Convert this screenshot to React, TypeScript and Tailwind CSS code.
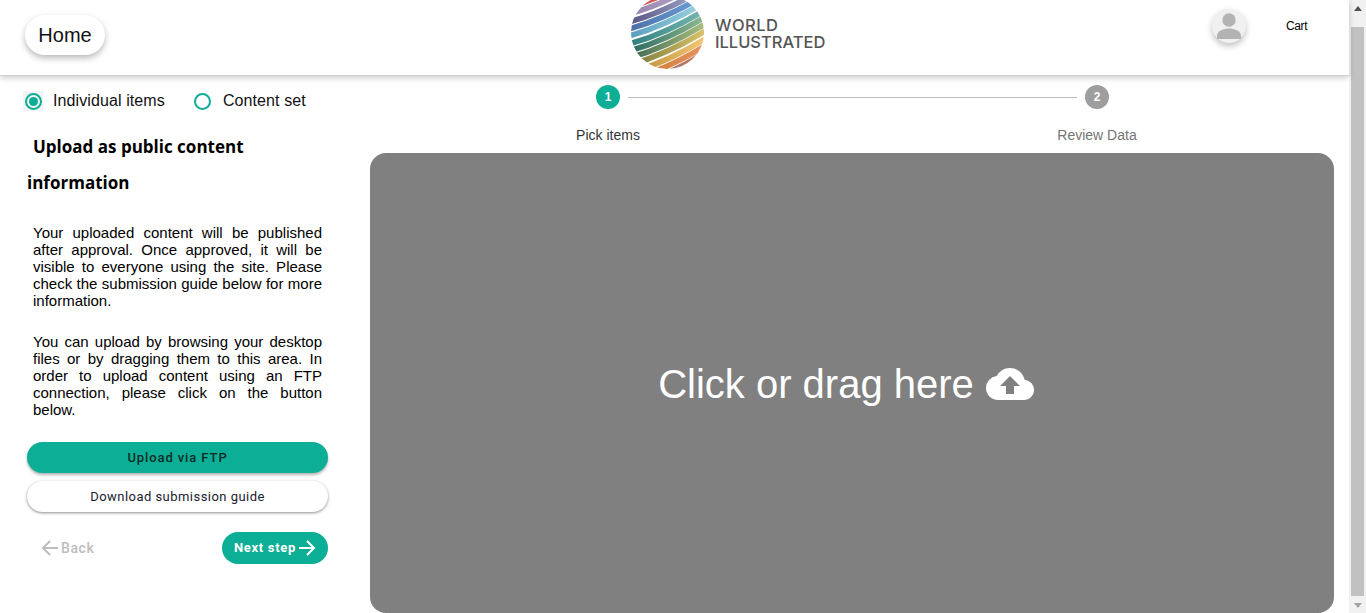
import { MdCloudUpload } from "react-icons/md";

const stripes = [
    { y: 8, from: "#c84a4a", to: "#e8756b" },
    { y: 15, from: "#9a86b0", to: "#b7a7c9" },
    { y: 23, from: "#5a5585", to: "#a8b0d0" },
    { y: 30, from: "#4e6fa8", to: "#6aa4d8" },
    { y: 37, from: "#5a9fc0", to: "#9fd4e0" },
    { y: 45, from: "#2f7f80", to: "#79b8b0" },
    { y: 52, from: "#2c6a60", to: "#8fb98f" },
    { y: 59, from: "#3f6a50", to: "#a9bd7e" },
    { y: 66, from: "#77783a", to: "#d9c26a" },
    { y: 74, from: "#b98a2c", to: "#f4c777" },
    { y: 81, from: "#c77a2c", to: "#e89060" },
    { y: 88, from: "#7a8aa0", to: "#c87050" },
];

const Globe = () => (
    <svg width="74" height="70" viewBox="631 0 74 70" className="block blur-[0.5px]">
        <defs>
            <clipPath id="globe-clip">
                <circle cx="667.5" cy="32.5" r="36.5" />
            </clipPath>
            {stripes.map((stripe) => (
                <linearGradient
                    key={stripe.y}
                    id={`band-${stripe.y}`}
                    gradientUnits="userSpaceOnUse"
                    x1="631"
                    y1="0"
                    x2="704"
                    y2="0"
                >
                    <stop offset="0" stopColor={stripe.from} />
                    <stop offset="1" stopColor={stripe.to} />
                </linearGradient>
            ))}
        </defs>
        <g clipPath="url(#globe-clip)">
            {stripes.map((stripe) => (
                <path
                    key={stripe.y}
                    d={`M625 ${stripe.y}Q665 ${stripe.y - 10} 710 ${stripe.y - 38}`}
                    fill="none"
                    stroke={`url(#band-${stripe.y})`}
                    strokeWidth="5.6"
                />
            ))}
        </g>
    </svg>
);

const PersonIcon = () => (
    <svg width="34" height="34" viewBox="0 0 34 34" className="block">
        <circle cx="17" cy="11" r="6.7" fill="#b3b3b3" />
        <path
            d="M5 30v-3.5C5 22 12 19.5 17 19.5S29 22 29 26.5V30Z"
            fill="#b3b3b3"
        />
    </svg>
);

const Radio = ({ label, checked }: { label: string; checked?: boolean }) => (
    <div className="flex items-center">
        <span
            className={`flex h-5 w-5 items-center justify-center ${checked ? "bg-[#f3f3f3]" : ""}`}
        >
            <span className="flex h-[17px] w-[17px] items-center justify-center rounded-full border-2 border-[#0cae95]">
                {checked && <span className="h-[9px] w-[9px] rounded-full bg-[#0cae95]" />}
            </span>
        </span>
        <span className="ml-[10px] text-base text-[#111] font-['Liberation_Sans',sans-serif] tracking-[0.1px]">
            {label}
        </span>
    </div>
);

const Sidebar = () => (
    <aside className="w-[370px] shrink-0">
        <div className="mt-[13px] ml-[23px] flex gap-[28px]">
            <Radio label="Individual items" checked />
            <Radio label="Content set" />
        </div>
        <h2 className="mt-[16px] ml-[27px] w-[300px] text-[17px] leading-9 font-bold text-black indent-[6px] font-['Open_Sans',sans-serif]">
            Upload as public content information
        </h2>
        <div className="mt-[23px] ml-[33px] w-[289px] text-justify text-[15px] leading-[17px] text-black font-['Liberation_Sans',sans-serif]">
            <p>
                Your uploaded content will be published after approval. Once approved, it will be
                visible to everyone using the site. Please check the submission guide below for more
                information.
            </p>
            <p className="mt-[24px]">
                You can upload by browsing your desktop files or by dragging them to this area. In
                order to upload content using an FTP connection, please click on the button below.
            </p>
        </div>
        <div className="mt-[24px] ml-[27px] flex w-[301px] flex-col gap-2 font-['Roboto',sans-serif]">
            <button className="h-[31px] rounded-full bg-[#0cae95] text-[13px] font-medium tracking-[0.9px] text-[#0d2b26] shadow-[0_2px_3px_rgba(0,0,0,0.3)]">
                Upload via FTP
            </button>
            <button className="h-[31px] rounded-full bg-white text-[13px] tracking-[0.46px] text-[#1a1a2e] shadow-[0_1px_3px_rgba(0,0,0,0.45)]">
                Download submission guide
            </button>
            <div className="mt-3 flex items-center justify-between">
                <button className="ml-[14px] flex items-center gap-[3px] pb-[1px] text-sm font-medium tracking-[0.6px] text-[#bdbdbd]">
                    <svg width="17" height="16" viewBox="0 0 17 16" fill="none" stroke="currentColor" strokeWidth="2">
                        <path d="M17 8H2M9 1 2 8l7 7" />
                    </svg>
                    Back
                </button>
                <button className="flex h-8 w-[106px] items-center justify-center gap-[3px] rounded-full bg-[#0cae95] pb-[1px] text-[13px] font-bold tracking-[0.7px] text-white">
                    Next step
                    <svg width="17" height="16" viewBox="0 0 17 16" fill="none" stroke="currentColor" strokeWidth="2">
                        <path d="M0 8h15M8 1l7 7-7 7" />
                    </svg>
                </button>
            </div>
        </div>
    </aside>
);

const Stepper = () => (
    <div className="font-['Liberation_Sans',sans-serif]">
        <div className="mt-[9px] ml-[226px] flex w-[513px] items-center">
            <span className="flex h-6 w-6 items-center justify-center rounded-full bg-[#0cae95] text-xs font-bold text-white">
                1
            </span>
            <span className="mx-2 h-px flex-1 bg-[#bdbdbd]" />
            <span className="flex h-6 w-6 items-center justify-center rounded-full bg-[#9e9e9e] text-xs font-bold text-white">
                2
            </span>
        </div>
        <div className="mt-[18px] ml-[190px] flex w-[585px] justify-between text-center text-sm leading-4">
            <span className="w-24 text-[#333]">Pick items</span>
            <span className="w-24 text-[#757575]">Review Data</span>
        </div>
    </div>
);

const App = () => {
    return (
        <div className="flex h-[613px] overflow-hidden bg-white">
            <div className="flex w-[1349px] flex-col">
                <header className="relative z-10 flex h-[76px] shrink-0 border-b border-[#d0d0d0] bg-white shadow-[0_2px_6px_rgba(0,0,0,0.2)]">
                    <div className="w-[631px] shrink-0 pt-[15px] pl-[25px]">
                        <button className="h-10 w-20 rounded-full bg-white text-xl text-[#111] shadow-[0_3px_6px_rgba(0,0,0,0.28)] font-['Liberation_Sans',sans-serif]">
                            Home
                        </button>
                    </div>
                    <Globe />
                    <div className="mt-[17px] ml-[10px] w-[497px] shrink-0 text-[16.5px] leading-[17px] font-medium text-[#555] font-['Inter',sans-serif]">
                        <div className="tracking-[0.5px]">WORLD</div>
                        <div>ILLUSTRATED</div>
                    </div>
                    <div className="absolute top-[9px] left-[1212px] h-[34px] w-[34px] rounded-full bg-[#f0f0f0] shadow-[0_3px_6px_rgba(0,0,0,0.25)]">
                        <PersonIcon />
                    </div>
                    <span className="absolute top-[18px] left-[1286px] text-xs tracking-[-0.4px] text-black font-['Liberation_Sans',sans-serif]">
                        Cart
                    </span>
                </header>
                <div className="flex min-h-0 flex-1">
                    <Sidebar />
                    <main className="flex w-[964px] shrink-0 flex-col">
                        <Stepper />
                        <div className="mt-[10px] flex flex-1 items-center justify-center gap-3 rounded-2xl bg-[#808080] pt-[2px] pr-[12px] text-white font-['Liberation_Sans',sans-serif]">
                            <span className="text-[40px] leading-none">Click or drag here</span>
                            <MdCloudUpload size={48} />
                        </div>
                    </main>
                </div>
            </div>
            <div className="flex w-[17px] shrink-0 flex-col items-center bg-[#f1f1f1]">
                <span className="mt-[6px] h-0 w-0 border-x-[4px] border-b-[5px] border-x-transparent border-b-[#505050]" />
                <span className="mt-4 h-[569px] w-[13px] bg-[#c1c1c1]" />
                <span className="mt-[7px] h-0 w-0 border-x-[4px] border-t-[5px] border-x-transparent border-t-[#a3a3a3]" />
            </div>
        </div>
    );
};

export default App;
